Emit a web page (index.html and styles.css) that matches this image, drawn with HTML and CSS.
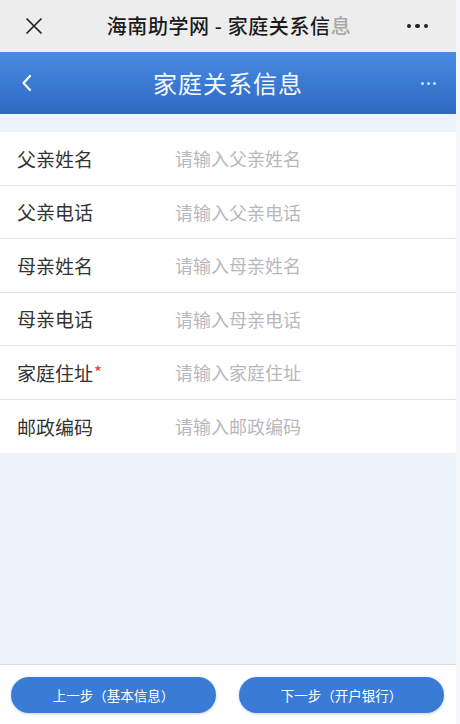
FILE: index.html
```html
<!DOCTYPE html>
<html lang="zh-CN">
<head>
<meta charset="utf-8">
<title>家庭关系信息</title>
<link rel="stylesheet" href="styles.css">
</head>
<body>
<div class="screen">
  <div class="page">
    <div class="wxbar">
      <span class="wx-close">
        <svg width="20" height="20" viewBox="0 0 20 20"><path d="M2.5 2.5 L17.5 17.5 M17.5 2.5 L2.5 17.5" stroke="#222" stroke-width="1.7" fill="none"/></svg>
      </span>
      <span class="wx-title">海南助学网 - 家庭关系信<span class="fade">息</span></span>
      <span class="wx-more"><i></i><i></i><i></i></span>
    </div>
    <div class="header">
      <span class="back">
        <svg width="14" height="18" viewBox="0 0 14 18"><path d="M10 2 L3.5 9 L10 16" stroke="#fff" stroke-width="2.2" fill="none" stroke-linecap="round" stroke-linejoin="round"/></svg>
      </span>
      <span class="h-title">家庭关系信息</span>
      <span class="h-more"><i></i><i></i><i></i></span>
    </div>
    <div class="form">
      <div class="row"><span class="label">父亲姓名</span><span class="ph">请输入父亲姓名</span></div>
      <div class="row"><span class="label">父亲电话</span><span class="ph">请输入父亲电话</span></div>
      <div class="row"><span class="label">母亲姓名</span><span class="ph">请输入母亲姓名</span></div>
      <div class="row"><span class="label">母亲电话</span><span class="ph">请输入母亲电话</span></div>
      <div class="row"><span class="label">家庭住址<em class="req">*</em></span><span class="ph">请输入家庭住址</span></div>
      <div class="row"><span class="label">邮政编码</span><span class="ph">请输入邮政编码</span></div>
    </div>
    <div class="spacer"></div>
    <div class="footer">
      <button class="btn">上一步（基本信息）</button>
      <button class="btn">下一步（开户银行）</button>
    </div>
  </div>
  <div class="edge"></div>
</div>
</body>
</html>
```
FILE: styles.css
```css
* { box-sizing: border-box; }
html, body { margin: 0; padding: 0; }
body {
  font-family: "Noto Sans CJK SC", "Noto Sans", sans-serif;
  background: #f4f6f9;
}
.screen {
  display: flex;
  width: 460px;
  height: 724px;
  overflow: hidden;
}
.page {
  width: 456px;
  height: 724px;
  display: flex;
  flex-direction: column;
  background: #edf3fb;
}
.edge {
  flex: 1;
  background: #f4f6f9;
}
.wxbar {
  height: 52px;
  background: #ededed;
  display: flex;
  align-items: center;
  position: relative;
}
.wx-close {
  width: 20px;
  height: 20px;
  margin-left: 24px;
  display: flex;
}
.wx-title {
  position: absolute;
  left: 0;
  right: 0;
  text-align: center;
  font-size: 20px;
  font-weight: 500;
  color: #1b1b1b;
  letter-spacing: 0.6px;
  padding-left: 2px;
  line-height: 52px;
  pointer-events: none;
}
.wx-title .fade { color: #a8a8a8; }
.wx-more {
  margin-left: auto;
  margin-right: 28px;
  display: flex;
  gap: 4px;
}
.wx-more i {
  width: 4.5px;
  height: 4.5px;
  border-radius: 50%;
  background: #222;
}
.header {
  height: 62px;
  background: linear-gradient(#4a8be2, #2d69c2);
  display: flex;
  align-items: center;
  position: relative;
  color: #fff;
}
.back {
  display: flex;
  margin-left: 20px;
}
.h-title {
  position: absolute;
  left: 0;
  right: 0;
  text-align: center;
  font-size: 24px;
  letter-spacing: 1px;
  line-height: 62px;
  color: #f4f8ff;
}
.h-more {
  margin-left: auto;
  margin-right: 20px;
  display: flex;
  gap: 3px;
}
.h-more i {
  width: 3px;
  height: 3px;
  border-radius: 50%;
  background: #cfe0fa;
}
.form {
  margin-top: 18px;
  background: #fff;
}
.row {
  height: 53.5px;
  display: flex;
  align-items: center;
  border-bottom: 1px solid #e2e4e8;
}
.row:last-child { border-bottom: none; }
.label {
  width: 175px;
  padding-left: 17px;
  font-size: 19px;
  color: #333;
}
.req {
  font-style: normal;
  color: #e0393e;
  font-size: 17px;
  margin-left: 1px;
  vertical-align: 2px;
}
.ph {
  font-size: 18px;
  color: #b8b8bc;
}
.spacer { flex: 1; }
.footer {
  height: 60px;
  background: #fff;
  border-top: 1px solid #d9dee7;
  display: flex;
  align-items: center;
  justify-content: space-between;
  padding: 0 12px 0 11px;
}
.btn {
  width: 205px;
  height: 36px;
  border: none;
  border-radius: 18px;
  background: #3a7bd6;
  color: #fff;
  font-family: inherit;
  font-size: 13.5px;
  padding: 0;
  box-shadow: 0 1px 3px rgba(58,123,214,0.35);
}
```
